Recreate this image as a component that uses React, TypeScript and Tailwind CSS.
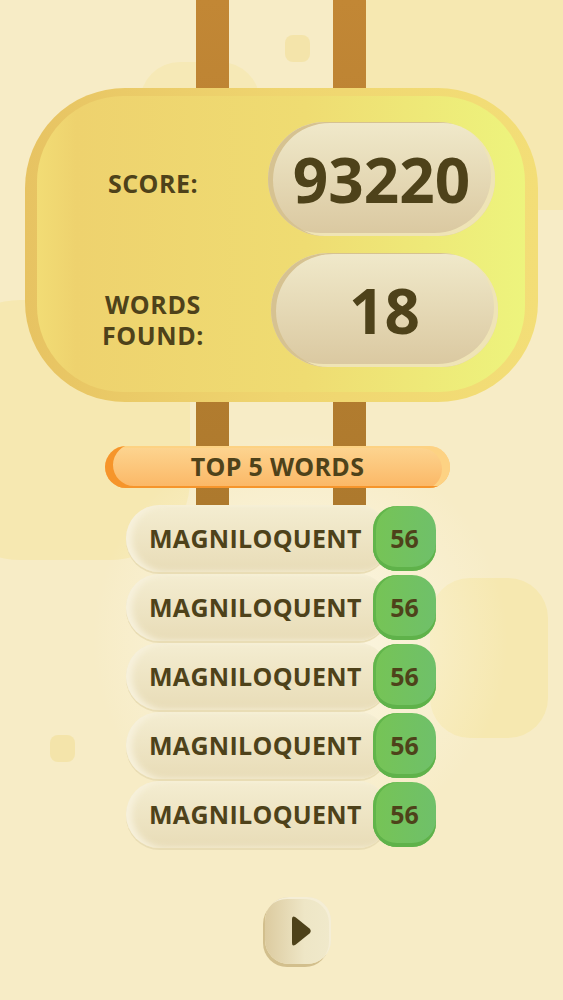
const ink = "text-[#4e421a]";

function Blobs() {
  return (
    <div className="pointer-events-none absolute inset-0 overflow-hidden">
      <div className="absolute left-[360px] top-[-40px] h-[250px] w-[320px] rounded-[70px] bg-[#f6e8b1]" />
      <div className="absolute left-[-60px] top-[300px] h-[260px] w-[250px] rounded-[80px] bg-[#f6e8b1]" />
      <div className="absolute left-[140px] top-[62px] h-[120px] w-[120px] rounded-[40px] bg-[#f6e9b6]" />
      <div className="absolute left-[430px] top-[578px] h-[160px] w-[118px] rounded-[40px] bg-[#f6e8b0]" />
      <div className="absolute left-[285px] top-[35px] h-[27px] w-[25px] rounded-[8px] bg-[#f4e4aa]" />
      <div className="absolute left-[50px] top-[735px] h-[27px] w-[25px] rounded-[8px] bg-[#f4e4aa]" />
      <div className="absolute left-[90px] top-[430px] h-[420px] w-[420px] rounded-full bg-[radial-gradient(circle,#fcf7e6_0%,rgba(252,247,230,0)_70%)]" />
    </div>
  );
}

function Posts() {
  return (
    <div className="pointer-events-none absolute left-[196px] top-0 flex h-[505px] gap-[104px]">
      <div className="w-[33px] bg-[linear-gradient(to_bottom,#c28735,#ad792d)]" />
      <div className="w-[33px] bg-[linear-gradient(to_bottom,#c28735,#ad792d)]" />
    </div>
  );
}

function ValuePill({ value }: { value: string }) {
  return (
    <div className="flex h-[114px] w-[227px] items-center justify-center rounded-full bg-[linear-gradient(to_bottom,#f0e9ca,#dac8a0)] shadow-[inset_5px_1px_0_#d6c291,inset_-4px_-3px_0_#efe4b6]">
      <span className={`text-[62px] font-bold leading-none ${ink}`}>{value}</span>
    </div>
  );
}

function ScorePanel() {
  return (
    <div className="ml-[25px] h-[314px] w-[513px] rounded-[100px] bg-[linear-gradient(to_right,#e7c362,#efd56f_50%,#f3de77)] pb-[10px] pl-[12px] pr-[13px] pt-[8px]">
      <div className="flex h-full w-full flex-col justify-center gap-[17px] rounded-[86px] bg-[linear-gradient(to_right,#f2dc75,#eed26e_8%,#efdc72_55%,#edf47d)] pl-[61px]">
        <div className="flex items-center">
          <div className={`mt-[10px] w-[110px] text-center text-[25px] font-bold tracking-[0.5px] ${ink}`}>SCORE:</div>
          <div className="ml-[60px]">
            <ValuePill value="93220" />
          </div>
        </div>
        <div className="flex items-center">
          <div className={`mt-[20px] w-[110px] text-center text-[25px] font-bold leading-[31px] tracking-[0.6px] ${ink}`}>
            WORDS
            <br />
            FOUND:
          </div>
          <div className="ml-[63px]">
            <ValuePill value="18" />
          </div>
        </div>
      </div>
    </div>
  );
}

function WordRow({ word, points }: { word: string; points: number }) {
  return (
    <div className="flex h-[69px] items-center">
      <div className="flex h-[67px] w-[262px] items-center rounded-l-[34px] rounded-r-[30px] bg-[linear-gradient(to_bottom,#f4edd1,#e8dcb7)] pl-[23px] shadow-[inset_6px_0_6px_#f7f1dc,0_2px_0_#e9ddb5]">
        <span className={`text-[25px] font-bold tracking-[0.3px] ${ink}`}>{word}</span>
      </div>
      <div className="-ml-[15px] flex h-[65px] w-[63px] items-center justify-center rounded-[24px] bg-[linear-gradient(to_right,#76c455,#6fc06a)] shadow-[inset_0_-4px_0_#5fb24a,inset_3px_0_0_#62b54b]">
        <span className={`text-[25px] font-bold ${ink}`}>{points}</span>
      </div>
    </div>
  );
}

export default function App() {
  const words = Array.from({ length: 5 }, () => ({ word: "MAGNILOQUENT", points: 56 }));
  return (
    <div
      className="relative h-[1000px] w-[563px] overflow-hidden bg-[#f7ecc6]"
      style={{ fontFamily: '"Open Sans", "Liberation Sans", sans-serif' }}
    >
      <Blobs />
      <Posts />
      <div className="relative flex flex-col">
        <div className="h-[88px]" />
        <ScorePanel />
        <div className="mt-[44px] flex justify-start pl-[105px]">
          <div className="flex h-[42px] w-[345px] items-center justify-center rounded-full bg-[linear-gradient(to_bottom,#fdd591,#fbb765)] shadow-[inset_8px_-2px_0_#f6952b,inset_-8px_2px_0_#fdd283]">
            <span className={`text-[25px] font-bold tracking-[0.3px] ${ink}`}>TOP 5 WORDS</span>
          </div>
        </div>
        <div className="mt-[16px] flex flex-col pl-[126px]">
          {words.map((w, i) => (
            <WordRow key={i} word={w.word} points={w.points} />
          ))}
        </div>
        <div className="mt-[48px] flex pl-[265px]">
          <button className="flex h-[67px] w-[66px] items-center justify-center rounded-[24px] bg-[linear-gradient(to_right,#dccba0,#eee6c6_60%,#f0e9cb)] shadow-[-2px_3px_0_#d2bf8d,inset_-2px_2px_0_#f5eed6]">
            <svg width="22" height="32" viewBox="0 0 22 32" className="ml-[6px]">
              <path d="M2 4 Q2 0 5.5 2.2 L19.5 13.5 Q22 16 19.5 18.5 L5.5 29.8 Q2 32 2 28 Z" fill="#4e421a" />
            </svg>
          </button>
        </div>
      </div>
    </div>
  );
}
